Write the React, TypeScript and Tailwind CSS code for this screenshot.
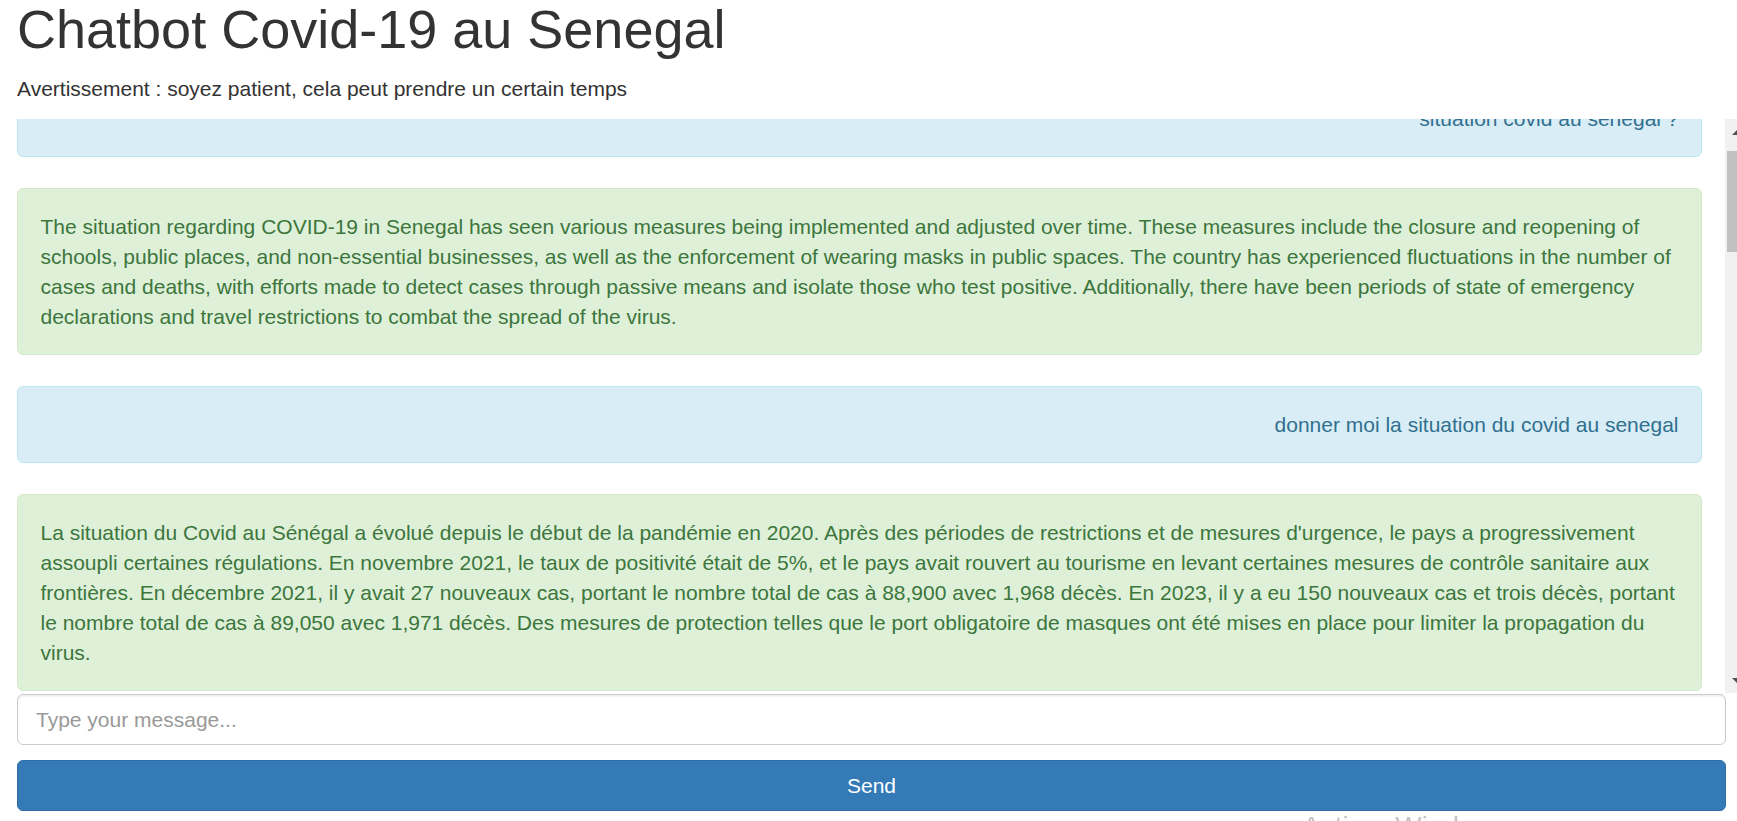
import React, { useEffect, useRef, useState } from 'react';

type Msg = { from: 'user' | 'bot'; text: string };

const messages: Msg[] = [
  { from: 'user', text: 'situation covid au senegal ?' },
  {
    from: 'bot',
    text: 'The situation regarding COVID-19 in Senegal has seen various measures being implemented and adjusted over time. These measures include the closure and reopening of schools, public places, and non-essential businesses, as well as the enforcement of wearing masks in public spaces. The country has experienced fluctuations in the number of cases and deaths, with efforts made to detect cases through passive means and isolate those who test positive. Additionally, there have been periods of state of emergency declarations and travel restrictions to combat the spread of the virus.',
  },
  { from: 'user', text: 'donner moi la situation du covid au senegal' },
  {
    from: 'bot',
    text: "La situation du Covid au Sénégal a évolué depuis le début de la pandémie en 2020. Après des périodes de restrictions et de mesures d'urgence, le pays a progressivement assoupli certaines régulations. En novembre 2021, le taux de positivité était de 5%, et le pays avait rouvert au tourisme en levant certaines mesures de contrôle sanitaire aux frontières. En décembre 2021, il y avait 27 nouveaux cas, portant le nombre total de cas à 88,900 avec 1,968 décès. En 2023, il y a eu 150 nouveaux cas et trois décès, portant le nombre total de cas à 89,050 avec 1,971 décès. Des mesures de protection telles que le port obligatoire de masques ont été mises en place pour limiter la propagation du virus.",
  },
  { from: 'user', text: 'quelles sont les mesures de prevention ?' },
  {
    from: 'bot',
    text: "Pour se protéger du Covid-19, il est recommandé de se laver régulièrement les mains avec de l'eau et du savon ou d'utiliser un gel hydroalcoolique, de porter un masque dans les lieux publics et les transports, de respecter une distance d'au moins un mètre avec les autres personnes, de tousser ou d'éternuer dans son coude et d'éviter les rassemblements. La vaccination reste également un moyen efficace de réduire les formes graves de la maladie. En cas de symptômes, il est conseillé de s'isoler et de contacter le numéro vert du Ministère de la Santé et de l'Action sociale.",
  },
  { from: 'user', text: 'quels sont les symptomes du covid ?' },
  {
    from: 'bot',
    text: "Les symptômes les plus fréquents du Covid-19 sont la fièvre, la toux sèche et la fatigue. D'autres symptômes moins courants peuvent apparaître, comme les courbatures, les maux de gorge, la diarrhée, la conjonctivite, les maux de tête, la perte du goût ou de l'odorat, ou encore une éruption cutanée. Les symptômes graves comprennent la difficulté à respirer ou l'essoufflement, une sensation d'oppression ou une douleur au niveau de la poitrine, et une perte d'élocution ou de motricité. Dans ce cas, il faut consulter immédiatement un médecin ou se rendre dans un centre de santé.",
  },
  { from: 'user', text: 'ou se faire vacciner a dakar ?' },
  {
    from: 'bot',
    text: "À Dakar, la vaccination contre le Covid-19 est disponible dans les centres de santé, les postes de santé et les hôpitaux publics, notamment l'hôpital Principal, l'hôpital Fann, l'hôpital Dalal Jamm et le centre de santé Philippe Maguilen Senghor. Des équipes mobiles ont également été déployées dans certains quartiers et lieux de forte affluence. La vaccination est gratuite et il suffit de se présenter avec une pièce d'identité. Il est recommandé de vérifier les horaires auprès du district sanitaire le plus proche avant de se déplacer.",
  },
  { from: 'user', text: 'combien de personnes ont ete vaccinees ?' },
  {
    from: 'bot',
    text: "Selon les données du Ministère de la Santé et de l'Action sociale, plus de 1,5 million de personnes ont reçu au moins une dose de vaccin contre le Covid-19 au Sénégal, ce qui représente environ 9% de la population. La campagne de vaccination a débuté en février 2021 avec le vaccin Sinopharm, avant l'arrivée des vaccins AstraZeneca, Johnson & Johnson et Pfizer grâce à l'initiative COVAX. Les autorités continuent de sensibiliser la population afin d'augmenter la couverture vaccinale, en particulier chez les personnes âgées et les personnes souffrant de maladies chroniques.",
  },
  { from: 'user', text: 'quel est le numero vert ?' },
  {
    from: 'bot',
    text: "Le numéro vert mis en place par le Ministère de la Santé et de l'Action sociale pour toute information ou signalement lié au Covid-19 est le 800 00 50 50. Cet appel est gratuit depuis tous les opérateurs téléphoniques du Sénégal. Vous pouvez également joindre le SAMU national au 1515 en cas d'urgence médicale. Les opérateurs peuvent vous orienter vers le centre de dépistage ou de traitement le plus proche, répondre à vos questions sur la vaccination et vous donner des conseils sur les mesures à prendre si vous avez été en contact avec une personne testée positive. Des informations régulières sont aussi publiées sur le site officiel du ministère et sur ses réseaux sociaux.",
  },
  { from: 'user', text: 'combien de deces au total ?' },
  {
    from: 'bot',
    text: "Depuis le premier cas enregistré le 2 mars 2020, le Sénégal a recensé au total 1,971 décès liés au Covid-19 selon les derniers chiffres communiqués par le Ministère de la Santé et de l'Action sociale. La majorité de ces décès ont été enregistrés lors de la troisième vague de l'épidémie, durant l'été 2021, marquée par la circulation du variant Delta et une forte pression sur les structures hospitalières. Depuis, le nombre de décès a fortement diminué grâce à l'immunité acquise, à la vaccination et au renforcement de la prise en charge des patients. Les autorités sanitaires continuent toutefois de surveiller la situation et appellent la population à rester vigilante.",
  },
  { from: 'user', text: 'est ce que les frontieres sont ouvertes ?' },
  {
    from: 'bot',
    text: "Oui, les frontières du Sénégal sont ouvertes. Les voyageurs arrivant à l'aéroport international Blaise Diagne ne sont plus tenus de présenter un test PCR négatif ou un certificat de vaccination, mais il est conseillé de vérifier les exigences de la compagnie aérienne et du pays de destination avant le départ. Les mesures sanitaires peuvent être renforcées à tout moment en fonction de l'évolution de la situation épidémiologique.",
  },
  { from: 'user', text: 'merci' },
  {
    from: 'bot',
    text: "Je vous en prie ! N'hésitez pas si vous avez d'autres questions sur le Covid-19 au Sénégal. Prenez soin de vous et de vos proches.",
  },
];

export default function App() {
  const chatRef = useRef<HTMLDivElement>(null);
  const [thumb, setThumb] = useState({ top: 0, height: 100 });

  useEffect(() => {
    const el = chatRef.current;
    if (!el) return;
    el.scrollTop = 39;
    const update = () => {
      const track = el.clientHeight - 50;
      const h = Math.max(20, (track * el.clientHeight) / el.scrollHeight);
      const max = el.scrollHeight - el.clientHeight;
      const top = max > 0 ? (el.scrollTop / max) * (track - h) : 0;
      setThumb({ top, height: h });
    };
    update();
    el.addEventListener('scroll', update);
    return () => el.removeEventListener('scroll', update);
  }, []);

  return (
    <div className="w-full overflow-hidden bg-white font-['Liberation_Sans',Arial,sans-serif] text-[21px] leading-[30px] text-[#333]">
      <div className="pl-[17px] pr-[11px]">
        <h1 className="mb-[15px] text-[54px] font-normal leading-[59px]">Chatbot Covid-19 au Senegal</h1>
        <p className="mb-[15px]">Avertissement : soyez patient, cela peut prendre un certain temps</p>

        {/* chat box: messages + scrollbar (runs past the window edge) */}
        <div className="flex h-[574px] w-[calc(100%+24px)]">
          <div
            ref={chatRef}
            className="min-w-0 flex-1 overflow-y-scroll bg-white pr-[23px] [scrollbar-width:none] [&::-webkit-scrollbar]:hidden"
          >
            {messages.map((m, i) =>
              m.from === 'user' ? (
                <div
                  key={i}
                  className="mb-[31px] rounded-[6px] border border-[#bce8f1] bg-[#d9edf7] p-[22.5px] text-right text-[#31708f]"
                >
                  {m.text}
                </div>
              ) : (
                <div
                  key={i}
                  className="mb-[31px] rounded-[6px] border border-[#d6e9c6] bg-[#dff0d8] p-[22.5px] text-[#3c763d]"
                >
                  {m.text}
                </div>
              )
            )}
          </div>

          <div className="flex w-[25px] shrink-0 flex-col bg-[#f1f1f1]">
            <div className="flex h-[25px] items-center justify-center">
              <svg width="12" height="6" viewBox="0 0 12 6">
                <polygon points="6,0 12,6 0,6" fill="#505050" />
              </svg>
            </div>
            <div className="flex-1 px-[2px]">
              <div className="bg-[#c1c1c1]" style={{ marginTop: thumb.top, height: thumb.height }} />
            </div>
            <div className="flex h-[25px] items-center justify-center">
              <svg width="12" height="6" viewBox="0 0 12 6">
                <polygon points="0,0 12,0 6,6" fill="#505050" />
              </svg>
            </div>
          </div>
        </div>

        <input
          type="text"
          placeholder="Type your message..."
          className="mt-px block h-[51px] w-full rounded-[6px] border border-[#ccc] bg-white px-[18px] text-[21px] text-[#555] shadow-[inset_0_1.5px_1.5px_rgba(0,0,0,0.075)] outline-none placeholder:text-[#999]"
        />
        <button className="mt-[15px] block h-[51px] w-full rounded-[6px] border border-[#2e6da4] bg-[#337ab7] text-[21px] text-white">
          Send
        </button>
      </div>

      <div className="pointer-events-none fixed left-[1302px] top-[813px] text-[28px] leading-[28px] text-[#c4c4c4]">
        Activer Windows
      </div>
    </div>
  );
}
